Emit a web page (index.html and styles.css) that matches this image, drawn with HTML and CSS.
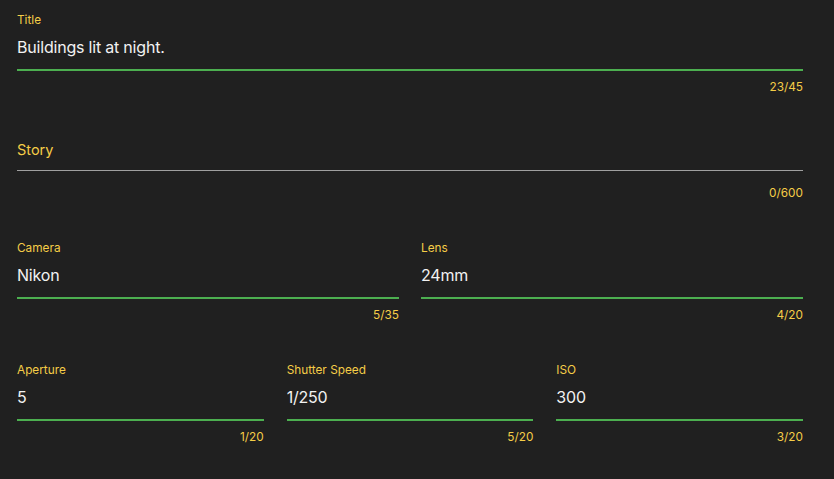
FILE: index.html
```html
<!DOCTYPE html>
<html>
<head>
<meta charset="utf-8">
<link rel="stylesheet" href="styles.css">
</head>
<body>
<form class="form">
  <div class="field">
    <div class="label">Title</div>
    <div class="input active">Buildings lit at night.</div>
    <div class="counter">23/45</div>
  </div>
  <div class="field story">
    <div class="label"></div>
    <div class="input idle"><span class="placeholder">Story</span></div>
    <div class="counter">0/600</div>
  </div>
  <div class="row two">
    <div class="field">
      <div class="label">Camera</div>
      <div class="input active">Nikon</div>
      <div class="counter">5/35</div>
    </div>
    <div class="field">
      <div class="label">Lens</div>
      <div class="input active">24mm</div>
      <div class="counter">4/20</div>
    </div>
  </div>
  <div class="row three">
    <div class="field">
      <div class="label">Aperture</div>
      <div class="input active">5</div>
      <div class="counter">1/20</div>
    </div>
    <div class="field">
      <div class="label">Shutter Speed</div>
      <div class="input active">1/250</div>
      <div class="counter">5/20</div>
    </div>
    <div class="field">
      <div class="label">ISO</div>
      <div class="input active">300</div>
      <div class="counter">3/20</div>
    </div>
  </div>
</form>
</body>
</html>
```
FILE: styles.css
```css
html, body {
  margin: 0;
  padding: 0;
  background: #202020;
  height: 100%;
}
body {
  font-family: Inter, "Noto Sans", sans-serif;
  color: #f2f2f2;
}
.form {
  padding: 12px 31px 0 17px;
  display: flex;
  flex-direction: column;
}
.field {
  display: flex;
  flex-direction: column;
  min-width: 0;
}
.label {
  font-size: 11.8px;
  line-height: 17px;
  height: 17px;
  color: #f5cd47;
}
.input {
  font-size: 16px;
  line-height: 20px;
  letter-spacing: -0.2px;
  padding: 8px 0 12px;
  border-bottom: 2px solid #4caf50;
}
.input.idle {
  border-bottom: 1px solid #a0a0a0;
  padding: 11px 0 11px;
  height: 20px;
}
.placeholder {
  font-size: 14.5px;
  letter-spacing: 0;
  color: #f5cd47;
}
.counter {
  font-size: 11.8px;
  line-height: 14px;
  margin-top: 9px;
  text-align: right;
  color: #f5cd47;
}
.story {
  margin-top: 17px;
}
.story .counter {
  margin-top: 15px;
}
.row {
  display: grid;
  margin-top: 40px;
}
.row.two {
  grid-template-columns: 1fr 1fr;
  column-gap: 22px;
}
.row.three {
  grid-template-columns: 1fr 1fr 1fr;
  column-gap: 23px;
}
```
